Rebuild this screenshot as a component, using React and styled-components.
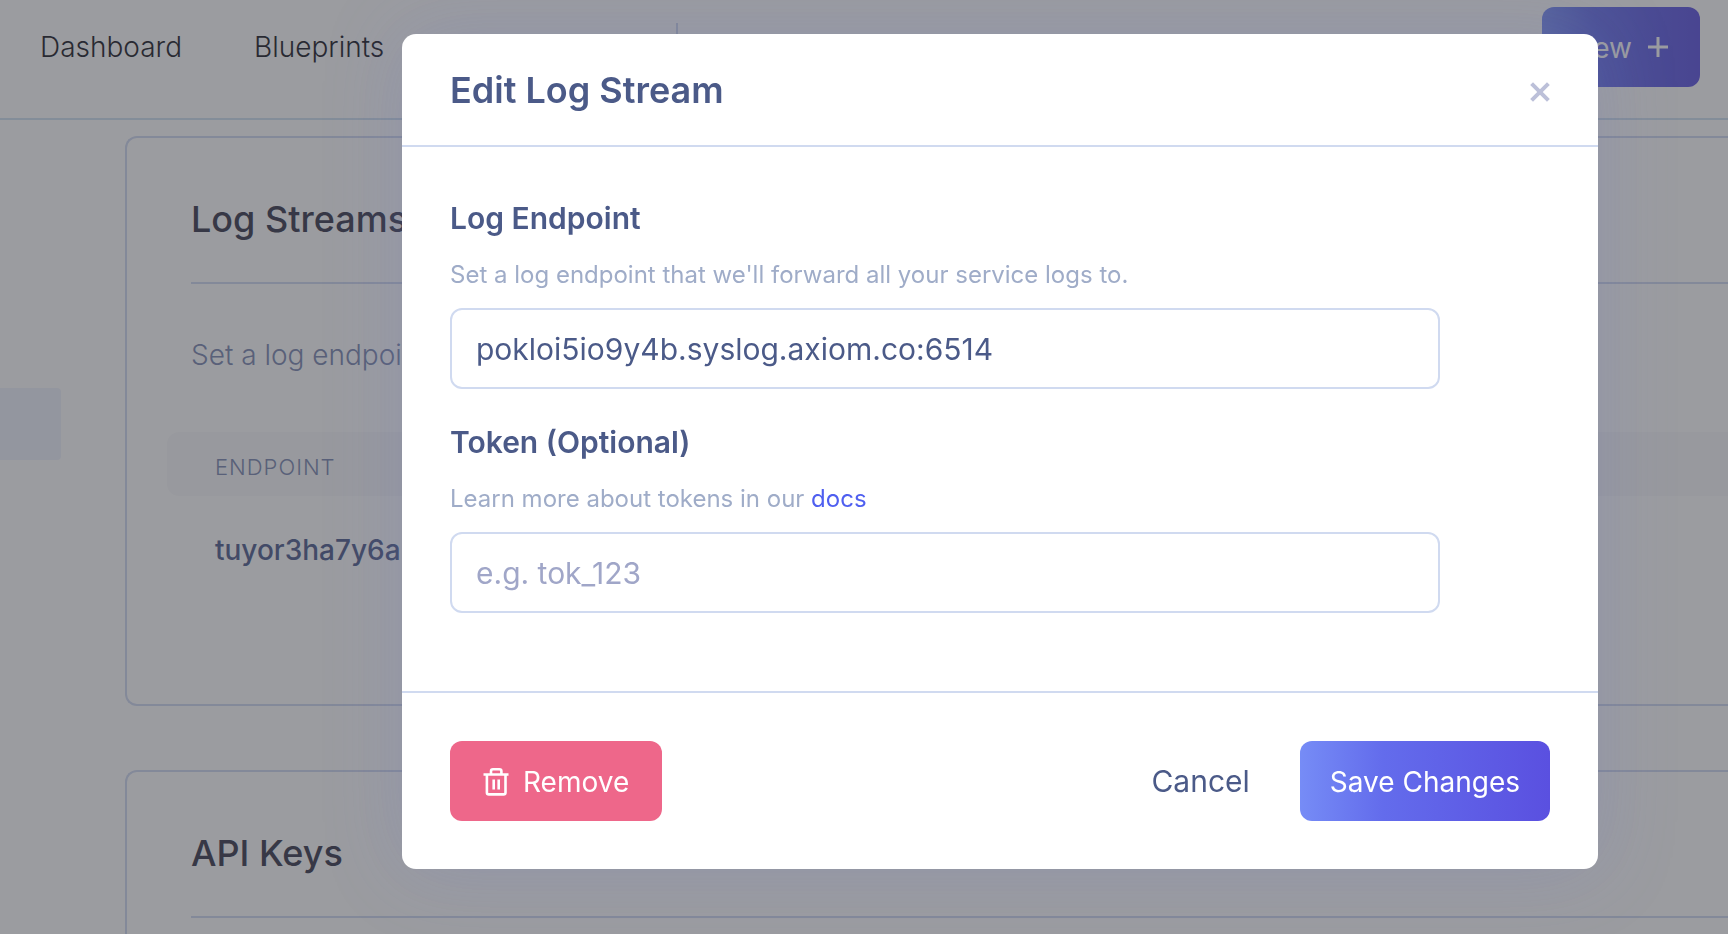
import React from "react";
import styled, { createGlobalStyle } from "styled-components";

const GlobalStyle = createGlobalStyle`
  *, *::before, *::after { box-sizing: border-box; }
  body {
    margin: 0;
    overflow: hidden;
    background: #ffffff;
    font-family: Inter, "Liberation Sans", sans-serif;
  }
  h1, h2, h3, p { margin: 0; }
  button, input { font: inherit; }
  button { cursor: pointer; }
`;

const Page = styled.div`
  height: 100vh;
  overflow: hidden;
`;

const TopBar = styled.header`
  display: flex;
  align-items: flex-start;
  justify-content: space-between;
  height: 120px;
  padding: 7px 28px 0 40px;
  border-bottom: 2px solid #cfe0f0;
`;

const Nav = styled.nav`
  display: flex;
  align-items: center;
  height: 80px;
  gap: 72px;
`;

const NavLink = styled.a`
  color: #181824;
  font-size: 28px;
  font-weight: 300;
  line-height: 36px;
  text-decoration: none;
`;

const NavDivider = styled.span`
  width: 2px;
  height: 48px;
  margin-left: 220px;
  background: #cfd8f0;
`;

const Button = styled.button`
  display: inline-flex;
  align-items: center;
  justify-content: center;
  gap: 14px;
  height: 80px;
  padding: 2px 30px 0;
  border: 0;
  border-radius: 12px;
  color: #ffffff;
  font-size: 28px;
  font-weight: 400;
  line-height: 36px;
  white-space: nowrap;
`;

const PrimaryButton = styled(Button)`
  background: linear-gradient(to right, #768cf6 0%, #636cec 33%, #5a50e0 100%);
`;

const DangerButton = styled(Button)`
  padding: 2px 33px 0;
  background: #ee678a;
`;

const GhostButton = styled(Button)`
  padding-top: 0;
  background: transparent;
  color: #4b5a88;
  font-size: 30px;
`;

const Layout = styled.div`
  display: grid;
  grid-template-columns: 61px minmax(0, 1fr);
  column-gap: 64px;
`;

const Sidebar = styled.aside`
  padding-top: 268px;
`;

const SidebarItem = styled.a`
  display: block;
  height: 72px;
  border-radius: 0 4px 4px 0;
  background: #eff3fc;
`;

const Main = styled.main`
  display: flex;
  flex-direction: column;
  gap: 64px;
  padding-top: 16px;
`;

const Card = styled.section`
  height: 570px;
  padding: 48px 0 0 64px;
  border: 2px solid #cfd8f0;
  border-right: 0;
  border-radius: 12px 0 0 12px;
`;

const CardTitle = styled.h2`
  padding: 9px 0 39px;
  border-bottom: 2px solid #cfd8f0;
  color: #37374b;
  font-size: 36px;
  font-weight: 500;
  line-height: 48px;
`;

const CardText = styled.p`
  padding: 52px 0 58px;
  color: #7a87b0;
  font-size: 28px;
  font-weight: 300;
  line-height: 38px;
`;

const Table = styled.table`
  width: calc(100% + 24px);
  margin-left: -24px;
  border-collapse: separate;
  border-spacing: 0;
  text-align: left;
`;

const HeadCell = styled.th`
  height: 64px;
  padding: 6px 48px 0;
  border-radius: 12px 0 0 12px;
  background: #f9f9fa;
  color: #7a87b0;
  font-size: 22px;
  font-weight: 300;
  letter-spacing: 1px;
`;

const Cell = styled.td`
  height: 108px;
  padding: 0 48px;
  color: #4d5b8c;
  font-size: 28px;
  font-weight: 500;
`;

const Overlay = styled.div`
  position: fixed;
  inset: 0;
  padding: 34px 130px 0 402px;
  background: rgba(55, 57, 65, 0.5);
`;

const Dialog = styled.div`
  border-radius: 14px;
  background: #ffffff;
  box-shadow: 0 0 80px rgba(110, 120, 200, 0.24);
  color: #4b5a88;
`;

const DialogHeader = styled.div`
  display: flex;
  align-items: center;
  justify-content: space-between;
  height: 113px;
  padding: 0 48px;
  border-bottom: 2px solid #d0daf0;
`;

const DialogTitle = styled.h1`
  font-size: 36px;
  font-weight: 600;
  line-height: 48px;
`;

const CloseButton = styled.button`
  display: flex;
  padding: 4px 0 0;
  border: 0;
  background: transparent;
  color: #bcc0d9;
`;

const DialogBody = styled.form`
  display: flex;
  flex-direction: column;
  gap: 32px;
  padding: 50px 48px 78px;
`;

const Field = styled.div`
  display: flex;
  flex-direction: column;
  max-width: 990px;
`;

const FieldLabel = styled.label`
  padding-bottom: 17px;
  font-size: 30px;
  font-weight: 600;
  line-height: 42px;
`;

const Hint = styled.p`
  padding-bottom: 14px;
  color: #9facc8;
  font-size: 24px;
  line-height: 38px;
`;

const HintLink = styled.a`
  color: #4f5ff0;
  text-decoration: none;
`;

const TextInput = styled.input`
  height: 81px;
  padding: 0 24px;
  border: 2px solid #d0daf0;
  border-radius: 12px;
  outline: 0;
  background: #ffffff;
  color: #4b5a88;
  font-size: 30px;

  &::placeholder {
    color: #a0a6c8;
    opacity: 1;
  }
`;

const DialogFooter = styled.div`
  display: flex;
  align-items: center;
  justify-content: space-between;
  padding: 48px;
  border-top: 2px solid #d0daf0;
`;

const FooterActions = styled.div`
  display: flex;
  gap: 20px;
`;

const PlusIcon = () => (
  <svg width="24" height="24" viewBox="0 0 24 24" fill="none" stroke="currentColor" strokeWidth="3" aria-hidden="true">
    <path d="M12 1v20M2 11h20" />
  </svg>
);

const CloseIcon = () => (
  <svg width="20" height="20" viewBox="0 0 20 20" fill="none" stroke="currentColor" strokeWidth="4" aria-hidden="true">
    <path d="M1.6 1.6l16.8 16.8M18.4 1.6L1.6 18.4" />
  </svg>
);

const TrashIcon = () => (
  <svg width="26" height="28" viewBox="0 0 26 28" fill="none" stroke="currentColor" strokeWidth="2.6" strokeLinejoin="round" aria-hidden="true">
    <path d="M.5 6.5h25M3.9 6.5V24.4a2 2 0 0 0 2 2h14.6a2 2 0 0 0 2-2V6.5M8 6.5V3.3a2 2 0 0 1 2-2h6.4a2 2 0 0 1 2 2v3.2M10.7 11.5v10M15.7 11.5v10" />
  </svg>
);

export default function App() {
  return (
    <>
      <GlobalStyle />
      <Page>
        <TopBar>
          <Nav>
            <NavLink href="#dashboard">Dashboard</NavLink>
            <NavLink href="#blueprints">Blueprints</NavLink>
            <NavDivider />
          </Nav>
          <PrimaryButton type="button">
            New <PlusIcon />
          </PrimaryButton>
        </TopBar>
        <Layout>
          <Sidebar>
            <SidebarItem href="#settings" aria-label="Settings" />
          </Sidebar>
          <Main>
            <Card>
              <CardTitle>Log Streams</CardTitle>
              <CardText>Set a log endpoint</CardText>
              <Table>
                <thead>
                  <tr>
                    <HeadCell scope="col">ENDPOINT</HeadCell>
                  </tr>
                </thead>
                <tbody>
                  <tr>
                    <Cell>tuyor3ha7y6a.</Cell>
                  </tr>
                </tbody>
              </Table>
            </Card>
            <Card>
              <CardTitle>API Keys</CardTitle>
            </Card>
          </Main>
        </Layout>
      </Page>
      <Overlay>
        <Dialog role="dialog" aria-modal="true" aria-labelledby="dialog-title">
          <DialogHeader>
            <DialogTitle id="dialog-title">Edit Log Stream</DialogTitle>
            <CloseButton type="button" aria-label="Close">
              <CloseIcon />
            </CloseButton>
          </DialogHeader>
          <DialogBody id="log-stream-form" onSubmit={(e) => e.preventDefault()}>
            <Field>
              <FieldLabel htmlFor="endpoint">Log Endpoint</FieldLabel>
              <Hint id="endpoint-hint">Set a log endpoint that we'll forward all your service logs to.</Hint>
              <TextInput
                id="endpoint"
                type="text"
                aria-describedby="endpoint-hint"
                defaultValue="pokloi5io9y4b.syslog.axiom.co:6514"
              />
            </Field>
            <Field>
              <FieldLabel htmlFor="token">Token (Optional)</FieldLabel>
              <Hint id="token-hint">
                Learn more about tokens in our <HintLink href="#docs">docs</HintLink>
              </Hint>
              <TextInput id="token" type="text" aria-describedby="token-hint" placeholder="e.g. tok_123" />
            </Field>
          </DialogBody>
          <DialogFooter>
            <DangerButton type="button">
              <TrashIcon /> Remove
            </DangerButton>
            <FooterActions>
              <GhostButton type="button">Cancel</GhostButton>
              <PrimaryButton type="submit" form="log-stream-form">
                Save Changes
              </PrimaryButton>
            </FooterActions>
          </DialogFooter>
        </Dialog>
      </Overlay>
    </>
  );
}
